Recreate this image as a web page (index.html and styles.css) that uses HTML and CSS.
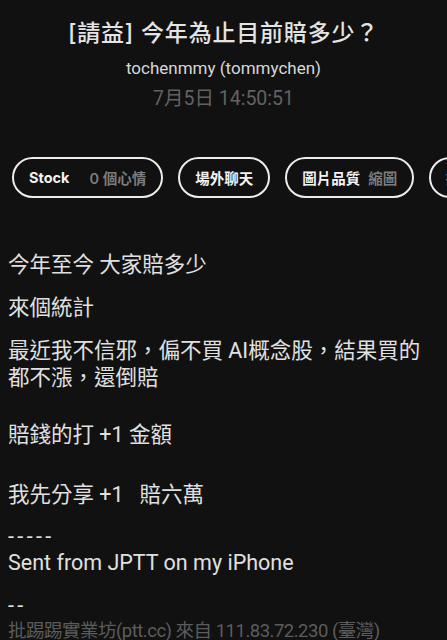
FILE: index.html
```html
<!DOCTYPE html>
<html lang="zh-Hant">
<head>
<meta charset="utf-8">
<link rel="stylesheet" href="styles.css">
</head>
<body>
<div class="page">
  <header class="head">
    <h1 class="title">[請益] 今年為止目前賠多少？</h1>
    <div class="author">tochenmmy (tommychen)</div>
    <div class="date">7月5日 14:50:51</div>
  </header>
  <nav class="pills">
    <div class="pill"><span class="strong">Stock</span><span class="muted wide">0 個心情</span></div>
    <div class="pill"><span class="strong">場外聊天</span></div>
    <div class="pill"><span class="strong">圖片品質</span><span class="muted">縮圖</span></div>
    <div class="pill"><span class="strong">排序方式</span></div>
  </nav>
  <article class="content">
    <p class="line">今年至今 大家賠多少</p>
    <p class="line">來個統計</p>
    <p class="line">最近我不信邪，偏不買 AI概念股，結果買的都不漲，還倒賠</p>
    <p class="line gap-a">賠錢的打 +1 金額</p>
    <p class="line gap-b">我先分享 +1&nbsp;&nbsp;&nbsp;賠六萬</p>
    <p class="line tight"><span class="dash">-----</span><br>Sent from JPTT on my iPhone</p>
    <p class="line tight sig"><span class="dash">--</span></p>
    <p class="line footer">批踢踢實業坊(ptt.cc) 來自 111.83.72.230 (臺灣)</p>
  </article>
</div>
</body>
</html>
```

FILE: styles.css
```css
html, body {
  margin: 0;
  padding: 0;
  background: #111111;
}
body {
  font-family: "Roboto", "Noto Sans CJK TC", sans-serif;
  color: #e2e2e2;
  overflow: hidden;
}
.page {
  width: 447px;
  height: 640px;
  overflow: hidden;
}
.head {
  display: flex;
  flex-direction: column;
  align-items: center;
  padding-top: 17px;
}
.title {
  margin: 0;
  font-family: "Inter", "Noto Sans CJK TC", sans-serif;
  font-size: 23px;
  font-weight: 500;
  line-height: 32px;
  color: #e4e4e4;
  letter-spacing: 0.8px;
}
.author {
  margin-top: 8px;
  font-size: 17px;
  line-height: 22px;
  color: #d8d8d8;
}
.date {
  margin-top: 8px;
  font-size: 19.5px;
  line-height: 24px;
  color: #626262;
}
.pills {
  display: flex;
  gap: 15px;
  padding: 46px 0 0 12px;
  white-space: nowrap;
}
.pill {
  flex: none;
  display: flex;
  align-items: center;
  gap: 8px;
  height: 37px;
  padding: 0 15px;
  border: 2px solid #ececec;
  border-radius: 22px;
  font-family: "Inter", "Noto Sans CJK TC", sans-serif;
  font-size: 14.5px;
  font-weight: 700;
}
.strong {
  color: #f2f2f2;
}
.muted {
  color: #7c7c7c;
  font-weight: 600;
}
.muted.wide {
  margin-left: 12px;
}
.content {
  padding: 53px 8px 0 8px;
}
.line {
  margin: 0 0 16px 0;
  font-size: 21.5px;
  line-height: 27px;
  color: #e0e0e0;
}
.dash {
  letter-spacing: 3.4px;
}
.line.gap-a {
  margin-top: 30px;
}
.line.gap-b {
  margin-top: 33px;
}
.line.tight {
  line-height: 26px;
}
.line.sig {
  margin-top: 17px;
}
.line.footer {
  margin-top: -16px;
  font-size: 18.5px;
  letter-spacing: -0.5px;
  line-height: 25px;
  color: #5c5c5c;
}
```
